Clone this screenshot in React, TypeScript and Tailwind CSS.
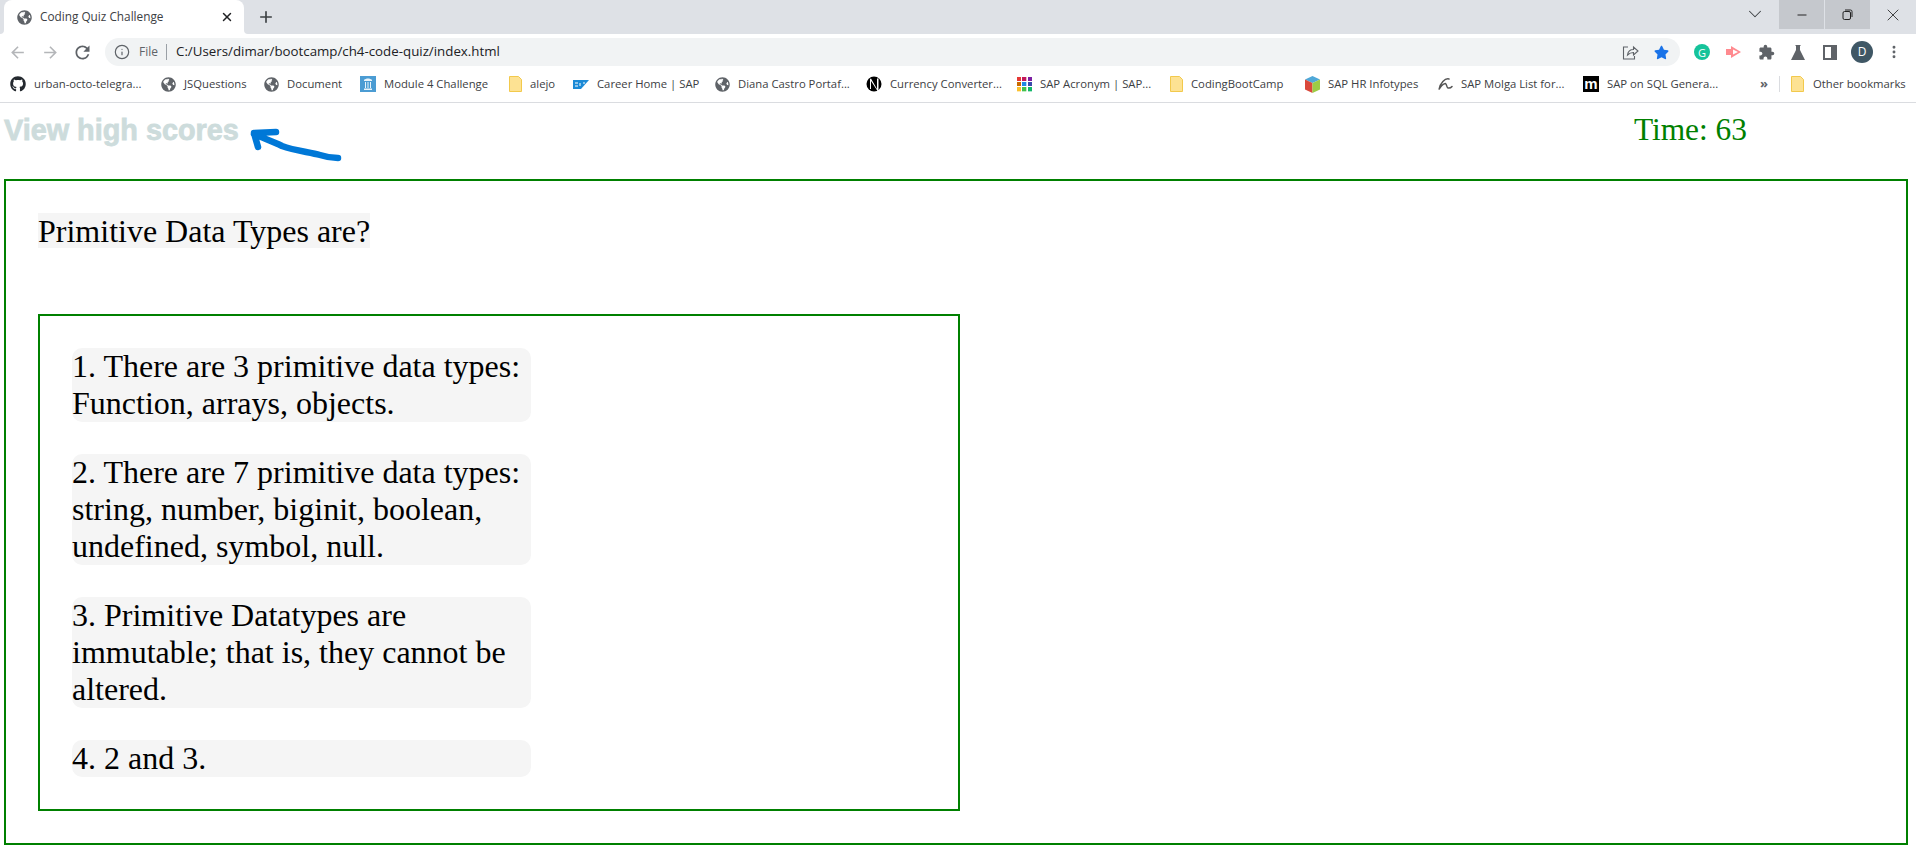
import React from "react";
import { FaGithub, FaGlobeAmericas, FaStar } from "react-icons/fa";
import { MdArrowBack, MdArrowForward, MdExtension, MdRefresh } from "react-icons/md";
import { Info, Plus, X, ChevronDown, Minus, MoreVertical } from "lucide-react";

function Globe() {
  return <FaGlobeAmericas className="w-[15px] h-[15px] text-[#5f6368] shrink-0" />;
}

function Folder() {
  return (
    <svg width="13" height="16" viewBox="0 0 13 16" className="shrink-0">
      <path d="M.5.5h9l3 3v12H.5z" fill="#fde293" stroke="#f2c94c" />
    </svg>
  );
}

function ModuleIcon() {
  return (
    <svg width="16" height="16" viewBox="0 0 16 16" className="shrink-0">
      <rect width="16" height="16" fill="#4b9cd3" />
      <path d="M4 4c2-2 6-2 8 0v1H4zM5 6h1v6H5zM7.500 6h1v6h-1zM10 6h1v6h-1zM4 12.500h8V14H4z" fill="#e8f3fa" />
    </svg>
  );
}

function SapLogo() {
  return (
    <svg width="16" height="9" viewBox="0 0 16 9" className="shrink-0">
      <path d="M0 0h16L8 9H0z" fill="#1c8ad6" />
      <path d="M2 3h3M2 6h3M7 3v3M10 3h2" stroke="#fff" strokeWidth="1" />
    </svg>
  );
}

function NIcon() {
  return (
    <svg width="16" height="16" viewBox="0 0 16 16" className="shrink-0">
      <circle cx="8" cy="8" r="7.500" fill="#000" />
      <path d="M5 2.500 11 13V2.500h1.500V15h-1L5 5v8H4V3z" fill="#fff" />
    </svg>
  );
}

function GridIcon() {
  const c = ["#e53935", "#c2185b", "#7b1fa2", "#c96a00", "#1e88e5", "#3949ab", "#fbc02d", "#43c14b", "#12b76a"];
  return (
    <div className="grid grid-cols-3 gap-px w-[15px] h-[15px] shrink-0">
      {c.map((x, i) => (
        <svg key={i} viewBox="0 0 4 4" className="w-full h-full">
          <rect width="4" height="4" fill={x} />
        </svg>
      ))}
    </div>
  );
}

function CubeIcon() {
  return (
    <svg width="15" height="17" viewBox="0 0 15 17" className="shrink-0">
      <path d="M7.500 0 15 3.500 7.500 7 0 3.500z" fill="#4fa8d8" />
      <path d="M0 3.500 7.500 7v10L0 13.500z" fill="#d9483b" />
      <path d="M15 3.500 7.500 7v10l7.500-3.500z" fill="#9ccc45" />
    </svg>
  );
}

function MolgaIcon() {
  return (
    <svg width="15" height="14" viewBox="0 0 15 14" className="shrink-0" fill="none" stroke="#555" strokeWidth="1.500" strokeLinecap="round">
      <path d="M11 2C7 1 2 6 1 12.500c1.500-3 4-5.500 6.500-6 1.500 1 1 4 2.500 4.500 1.500.3 3-.3 4-1.500" />
    </svg>
  );
}

function MIcon() {
  return (
    <div className="w-4 h-4 bg-black flex items-center justify-center text-white font-bold text-[15px] leading-none shrink-0 font-['Liberation_Sans',sans-serif]">
      <span className="-mt-0.5">m</span>
    </div>
  );
}

const bookmarks = [
  { w: "w-[151px]", icon: <FaGithub className="w-4 h-4 text-[#24292f] shrink-0" />, t: "urban-octo-telegra..." },
  { w: "w-[103px]", icon: <Globe />, t: "JSQuestions" },
  { w: "w-[96px]", icon: <Globe />, t: "Document" },
  { w: "w-[149px]", icon: <ModuleIcon />, t: "Module 4 Challenge" },
  { w: "w-[64px]", icon: <Folder />, t: "alejo" },
  { w: "w-[142px]", icon: <SapLogo />, t: "Career Home | SAP" },
  { w: "w-[151px]", icon: <Globe />, t: "Diana Castro Portaf..." },
  { w: "w-[151px]", icon: <NIcon />, t: "Currency Converter..." },
  { w: "w-[153px]", icon: <GridIcon />, t: "SAP Acronym | SAP..." },
  { w: "w-[135px]", icon: <Folder />, t: "CodingBootCamp" },
  { w: "w-[133px]", icon: <CubeIcon />, t: "SAP HR Infotypes" },
  { w: "w-[145px]", icon: <MolgaIcon />, t: "SAP Molga List for..." },
  { w: "w-[177px]", icon: <MIcon />, t: "SAP on SQL Genera..." },
];

const answers = [
  ["1. There are 3 primitive data types:", "Function, arrays, objects."],
  ["2. There are 7 primitive data types:", "string, number, biginit, boolean,", "undefined, symbol, null."],
  ["3. Primitive Datatypes are", "immutable; that is, they cannot be", "altered."],
  ["4. 2 and 3."],
];

export default function App() {
  return (
    <div className="relative h-[854px] overflow-hidden bg-white font-['Liberation_Serif',serif]">
      {/* Browser chrome */}
      <div className="font-['Open_Sans',sans-serif] text-[#3c4043]">
        <div className="h-[34px] bg-[#dee1e6] flex pl-1">
          <div className="relative w-[240px] h-[34px] bg-white rounded-t-lg flex items-center pl-[13px] pr-[10px]">
            <svg className="absolute -left-[4px] bottom-0" width="4" height="4" viewBox="0 0 4 4">
              <path d="M4 0v4H0a4 4 0 0 0 4-4z" fill="#fff" />
            </svg>
            <svg className="absolute -right-[4px] bottom-0" width="4" height="4" viewBox="0 0 4 4">
              <path d="M0 0v4h4a4 4 0 0 1-4-4z" fill="#fff" />
            </svg>
            <Globe />
            <span className="ml-[8px] text-[11.800px] flex-1">Coding Quiz Challenge</span>
            <X className="w-[14px] h-[14px] text-[#202124]" strokeWidth={2.5} />
          </div>
          <Plus className="w-[18px] h-[18px] ml-[13px] mt-[8px] text-[#3c4043]" strokeWidth={2.2} />
          <div className="flex-1" />
          <ChevronDown className="w-[22px] h-[22px] mt-[3px] mr-[13px] text-[#3c4043]" strokeWidth={1.1} />
          <div className="w-[45px] h-[29px] bg-[#c5c8cd] flex items-center justify-center">
            <Minus className="w-[14px] h-[14px] text-[#222]" strokeWidth={1.7} />
          </div>
          <div className="w-[45px] h-[29px] ml-px bg-[#c5c8cd] flex items-center justify-center">
            <svg width="11" height="11" viewBox="0 0 11 11" fill="none" stroke="#222" strokeWidth="1">
              <rect x="1" y="2.500" width="7.500" height="8" rx="1.500" />
              <path d="M3 1h5.500A1.500 1.500 0 0 1 10 2.500V8" />
            </svg>
          </div>
          <div className="w-[46px] h-[29px] flex items-center justify-center">
            <X className="w-[20px] h-[20px] text-[#222]" strokeWidth={1} />
          </div>
        </div>

        <div className="h-[42px] flex items-start pt-1 bg-white">
          <MdArrowBack className="w-[19px] h-[19px] ml-[8px] mt-[5px] text-[#b4b6b9]" />
          <MdArrowForward className="w-[19px] h-[19px] ml-[14px] mt-[5px] text-[#b4b6b9]" />
          <MdRefresh className="w-[21px] h-[21px] ml-[12px] mt-[4px] text-[#5f6368]" />
          <div className="w-[1575px] h-[28px] ml-[12px] bg-[#f1f3f4] rounded-full flex items-center pl-[9px] pr-[10px]">
            <Info className="w-[16px] h-[16px] text-[#5f6368]" strokeWidth={1.8} />
            <span className="ml-[9px] text-[12px] text-[#5f6368]">File</span>
            <span className="ml-[8px] w-px h-[16px] bg-[#9aa0a6]" />
            <span className="ml-[9px] text-[13.300px] text-[#202124] flex-1">C:/Users/dimar/bootcamp/ch4-code-quiz/index.html</span>
            <svg width="17" height="17" viewBox="0 0 17 17" fill="none" stroke="#5f6368" strokeWidth="1.100" className="mr-[15px]">
              <path d="M6 3H1.500v12h11v-3M5.500 11c.5-3.500 3-5.500 6-5.500V3l4.500 4-4.500 4V8.500c-2.500 0-4.500 1-6 2.500z" />
            </svg>
            <FaStar className="w-[15px] h-[15px] text-[#1a73e8] mr-[1px]" />
          </div>
          <div className="w-[16px] h-[16px] ml-[14px] mt-[6px] rounded-full bg-[#15c39a] flex items-center justify-center text-white text-[11px] leading-none">G</div>
          <svg width="16" height="14" viewBox="0 0 16 14" className="ml-[16px] mt-[7px]">
            <path d="M0 4h5V1l10 6-10 6v-3H0z" fill="#ff8a8f" />
            <path d="M7 4.500 12 7 7 9.500z" fill="#fff" />
          </svg>
          <MdExtension className="w-[17px] h-[17px] ml-[16px] mt-[6px] text-[#5f6368]" />
          <svg width="14" height="15" viewBox="0 0 14 15" className="ml-[16px] mt-[7px]">
            <path d="M4.500 0h5v1h-.5v4L14 15H0L5 5V1h-.5z" fill="#5f6368" />
          </svg>
          <div className="w-[14px] h-[15px] ml-[18px] mt-[7px] border-2 border-[#5f6368] border-r-[6px]" />
          <div className="w-[22px] h-[22px] ml-[14px] mt-[3px] rounded-full bg-[#3f5765] flex items-center justify-center text-white text-[12px] leading-none">D</div>
          <MoreVertical className="w-[16px] h-[16px] ml-[13px] mt-[6px] text-[#5f6368]" strokeWidth={2.4} />
        </div>

        <div className="h-[27px] border-b border-[#dadce0] flex items-start pl-[10px] text-[11.300px] leading-[16px] text-[#3c4043]">
          {bookmarks.map((b) => (
            <div key={b.t} className={`${b.w} flex items-center h-[16px] shrink-0`}>
              {b.icon}
              <span className="ml-[8px] whitespace-nowrap">{b.t}</span>
            </div>
          ))}
          <span className="text-[13px] leading-[14px] font-bold text-[#5f6368]">»</span>
          <span className="ml-[11px] w-px h-[16px] bg-[#dadce0]" />
          <div className="ml-[11px] flex items-center h-[16px]">
            <Folder />
            <span className="ml-[9px] whitespace-nowrap">Other bookmarks</span>
          </div>
        </div>
      </div>

      {/* Page */}
      <header className="h-[76px] flex items-start justify-between">
        <a className="ml-[4px] mt-[11px] text-[28.800px] leading-[33px] font-bold text-[#cddcdc] font-['Liberation_Sans',sans-serif] [-webkit-text-stroke:0.8px_#cddcdc]">View high scores</a>
        <span className="mr-[169px] mt-[8px] text-[31.400px] leading-[37px] text-[#008000]">Time: 63</span>
      </header>

      <main className="ml-[4px] w-[1904px] h-[666px] border-2 border-[#008000] pt-[32px] px-[32px]">
        <h2 className="w-fit h-[35px] bg-[#f5f5f5] text-[32px] leading-[37px] text-black font-normal">Primitive Data Types are?</h2>
        <section className="mt-[66px] w-[922px] h-[497px] border-2 border-[#008000] pt-[32px] px-[32px] flex flex-col gap-[32px]">
          {answers.map((a) => (
            <div key={a[0]} className="w-[459px] bg-[#f5f5f5] rounded-[10px] text-[32px] leading-[37px] text-black">
              {a.map((l) => (
                <div key={l} className="whitespace-nowrap">{l}</div>
              ))}
            </div>
          ))}
        </section>
      </main>

      {/* Hand-drawn annotation over the page */}
      <svg className="absolute left-0 top-0 pointer-events-none" width="400" height="200" fill="none" stroke="#0078d7" strokeWidth="6.500" strokeLinecap="round" strokeLinejoin="round">
        <path d="M276 132 L254 133 L258 147 M254 134 C262 138 272 141 282 146 C295 151 310 152 320 155 C326 157 332 158 338 158" />
      </svg>
    </div>
  );
}
